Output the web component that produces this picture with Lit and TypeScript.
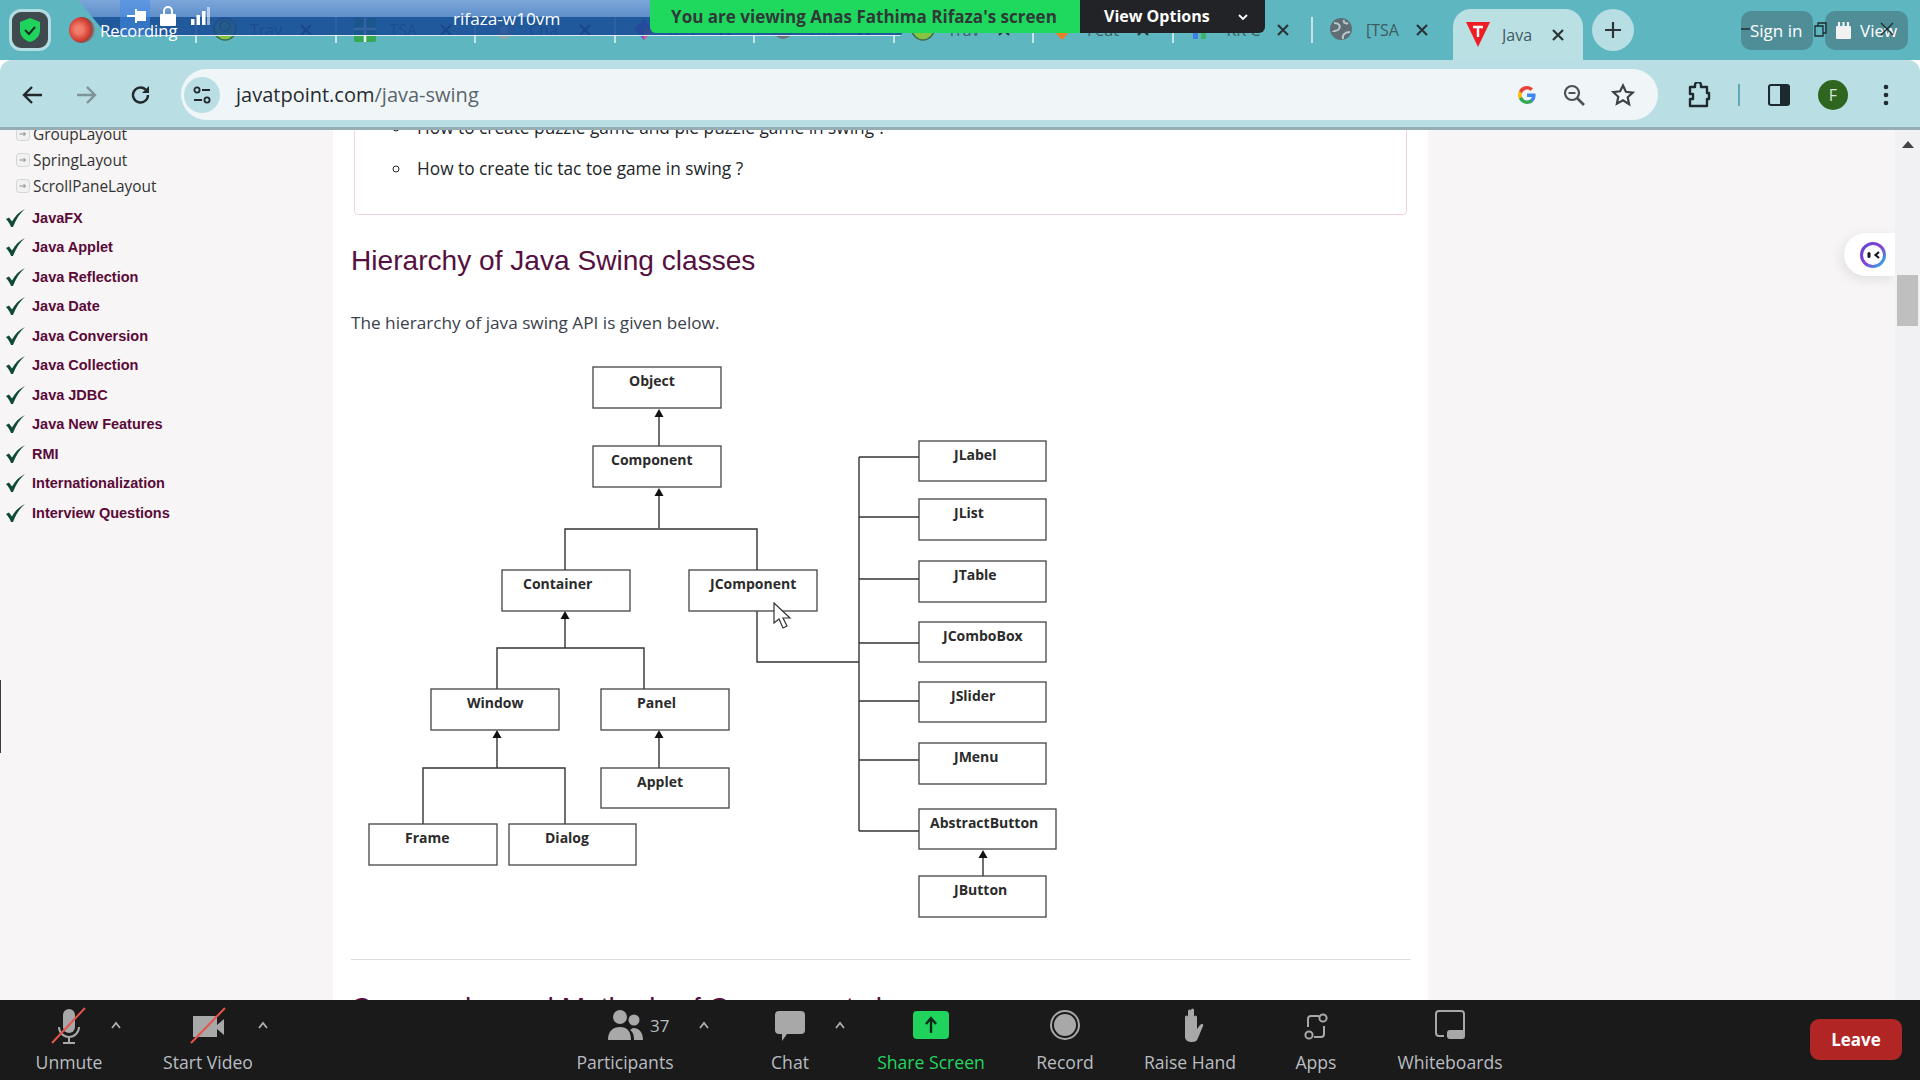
import { LitElement, css, html, svg } from 'lit';
import { customElement } from 'lit/decorators.js';

const TABS = [
  { title: 'Trav', icon: 'smile' },
  { title: 'TSA', icon: 'sheet' },
  { title: 'Cha', icon: 'chat' },
  { title: 'Dev', icon: 'gem' },
  { title: 'Yoo', icon: 'grey' },
  { title: 'Trav', icon: 'smile' },
  { title: 'Feat', icon: 'fox' },
  { title: 'KR C', icon: 'bars' },
  { title: '[TSA', icon: 'globe' },
];

const LAYOUTS = ['GroupLayout', 'SpringLayout', 'ScrollPaneLayout'];

const TOPICS = [
  'JavaFX', 'Java Applet', 'Java Reflection', 'Java Date', 'Java Conversion', 'Java Collection',
  'Java JDBC', 'Java New Features', 'RMI', 'Internationalization', 'Interview Questions',
];

// x, y, w, h, label, label x
const BOXES: [number, number, number, number, string, number][] = [
  [593, 366, 128, 41, 'Object', 629],
  [593, 445, 128, 41, 'Component', 611],
  [502, 569, 128, 41, 'Container', 523],
  [689, 569, 128, 41, 'JComponent', 710],
  [431, 688, 128, 41, 'Window', 467],
  [601, 688, 128, 41, 'Panel', 637],
  [601, 767, 128, 40, 'Applet', 637],
  [369, 823, 128, 41, 'Frame', 405],
  [509, 823, 127, 41, 'Dialog', 545],
  [919, 440, 127, 40, 'JLabel', 954],
  [919, 498, 127, 41, 'JList', 954],
  [919, 560, 127, 41, 'JTable', 954],
  [919, 621, 127, 40, 'JComboBox', 943],
  [919, 681, 127, 40, 'JSlider', 951],
  [919, 742, 127, 41, 'JMenu', 954],
  [919, 808, 137, 40, 'AbstractButton', 930],
  [919, 875, 127, 41, 'JButton', 954],
];

const WIRES = [
  'M659 445V414', 'M659 527V493', 'M565 569V528H757V569', 'M565 647V617', 'M497 688V647H644V688',
  'M497 767V736', 'M423 823V767H565V823', 'M659 767V736', 'M757 610V661H859',
  'M859 456V830', 'M859 456H919', 'M859 516H919', 'M859 578H919', 'M859 642H919', 'M859 700H919',
  'M859 759H919', 'M859 830H919', 'M983 875V855',
];

const ARROWS = [[659, 408], [659, 487], [565, 610], [497, 729], [659, 729], [983, 849]];

const GREY = '#a8a8a8';

const TOOL_ICONS: Record<string, unknown> = {
  mic: svg`<rect x="18" y="3" width="12" height="24" rx="6" fill="${GREY}"/>
    <path d="M14 21a10 10 0 0 0 20 0M24 31v5M18 37h12" fill="none" stroke="${GREY}" stroke-width="2"/>
    <path d="M40 2 7 37" stroke="#e5534b" stroke-width="2"/>`,
  video: svg`<path d="M9 10h24v21H9zM33 19l7-6v16l-7-6z" fill="${GREY}"/>
    <path d="M41 2 7 37" stroke="#e5534b" stroke-width="2"/>`,
  people: svg`<circle cx="19" cy="11" r="7" fill="${GREY}"/><circle cx="33" cy="14" r="5.5" fill="${GREY}"/>
    <path d="M7 34c0-9 5-13 12-13s11 4 11 13zM32 22c6 0 10 4 10 12H33c0-5-1-8-4-10z" fill="${GREY}"/>`,
  chat: svg`<path d="M13 5h22a4 4 0 0 1 4 4v15a4 4 0 0 1-4 4H21l-5 7v-7h-3a4 4 0 0 1-4-4V9a4 4 0 0 1 4-4z" fill="#a8a8a8"/>`,
  share: svg`<rect x="6" y="5" width="36" height="28" rx="4" fill="#1fd35c"/>
    <path d="M24 27V13M19 18l5-6 5 6" fill="none" stroke="#10281a" stroke-width="2.4"/>`,
  record: svg`<circle cx="24" cy="19" r="14" fill="none" stroke="${GREY}" stroke-width="2"/><circle cx="24" cy="19" r="11" fill="${GREY}"/>`,
  hand: svg`<path d="M19 31V11a1.5 1.5 0 0 1 3 0V5a1.5 1.5 0 0 1 3 0v5V4a1.5 1.5 0 0 1 3 0v7a1.5 1.5 0 0 1 3 0v12l3-4c2-2 4-1 3 1l-5 12c-1 3-3 4-6 4-4 0-7-2-7-5z" fill="${GREY}"/>`,
  apps: svg`<path d="M27 10h-8a3 3 0 0 0-3 3v8M32 20v8a3 3 0 0 1-3 3h-7" fill="none" stroke="${GREY}" stroke-width="2"/>
    <circle cx="31" cy="12" r="3.6" fill="none" stroke="${GREY}" stroke-width="2"/><circle cx="17" cy="29" r="3.6" fill="none" stroke="${GREY}" stroke-width="2"/>`,
  board: svg`<path d="M18 30h-5a3 3 0 0 1-3-3V8a3 3 0 0 1 3-3h22a3 3 0 0 1 3 3v19" fill="none" stroke="${GREY}" stroke-width="2"/>
    <rect x="21" y="24" width="18" height="9" rx="3" fill="${GREY}"/>`,
};

const TOOLS = [
  { label: 'Unmute', icon: 'mic', w: 78, ml: 30, caret: true },
  { label: 'Start Video', icon: 'video', w: 94, ml: 37, caret: true },
  { label: 'Participants', icon: 'people', w: 110, ml: 299, caret: true, count: '37', capMl: 16 },
  { label: 'Chat', icon: 'chat', w: 50, ml: 53, caret: true, capMl: 17 },
  { label: 'Share Screen', icon: 'share', w: 120, ml: 23, green: true },
  { label: 'Record', icon: 'record', w: 70, ml: 39 },
  { label: 'Raise Hand', icon: 'hand', w: 100, ml: 40 },
  { label: 'Apps', icon: 'apps', w: 50, ml: 51 },
  { label: 'Whiteboards', icon: 'board', w: 110, ml: 54 },
];

function favicon(kind: string) {
  switch (kind) {
    case 'smile':
      return svg`<circle cx="12" cy="12" r="11" fill="#86c440" stroke="#3f6b55" stroke-width="1.5"/><circle cx="12" cy="9" r="5" fill="none" stroke="#3f6b55" stroke-width="1.5"/>`;
    case 'sheet':
      return svg`<rect x="1" y="1" width="22" height="24" rx="2" fill="#37a853"/><path d="M12 1v24M1 12h22" stroke="#e8f5ec" stroke-width="2.5"/>`;
    case 'chat':
      return svg`<circle cx="12" cy="13" r="9" fill="#8aa9a8"/><circle cx="12" cy="13" r="4" fill="#cdd9d8"/>`;
    case 'gem':
      return svg`<path d="M12 2 22 12 12 23 2 12z" fill="#7b4fc0"/><path d="M12 12 22 12 12 23z" fill="#e05a8a"/>`;
    case 'grey':
      return svg`<circle cx="12" cy="12" r="10" fill="#6d7479"/>`;
    case 'fox':
      return svg`<path d="M12 23 2 12 7 3l5 4 5-4 5 9z" fill="#ef7d22"/>`;
    case 'bars':
      return svg`<rect x="3" y="8" width="5" height="14" fill="#3f7fe0"/><rect x="11" y="4" width="5" height="18" fill="#3eb36a"/>`;
    default:
      return svg`<circle cx="12" cy="12" r="11" fill="#5f6d75"/><path d="M5 6c5 0 7 3 5 6s-6 1-6 3M15 3c-1 3 2 4 4 3M14 22c-1-4 2-7 7-7" fill="none" stroke="#b9c6ca" stroke-width="2"/>`;
  }
}

@customElement('app-root')
export class AppRoot extends LitElement {
  static styles = css`
    :host { display: block; }
    * { box-sizing: border-box; }
    svg { display: block; flex: none; }
    .page {
      position: relative;
      display: flex;
      flex-direction: column;
      height: 1080px;
      overflow: hidden;
      font-family: 'Open Sans', sans-serif;
      background: #fff;
    }

    /* browser chrome */
    .strip {
      display: flex;
      align-items: center;
      flex: none;
      height: 60px;
      background: #5eb7c0;
    }
    .left { display: flex; align-items: center; flex: none; width: 195px; padding-left: 9px; }
    .shield {
      display: flex;
      align-items: center;
      justify-content: center;
      width: 42px;
      height: 42px;
      background: #3f4a4e;
      border: 3px solid #b5dde1;
      border-radius: 12px;
    }
    .rec-dot {
      position: relative;
      z-index: 2;
      width: 26px;
      height: 26px;
      margin-left: 18px;
      border-radius: 50%;
      background: radial-gradient(circle at 38% 48%, #f27d6c 0 18%, #cf3a2e 55%, #8a4a48 62%, #7d8b90 72%);
    }
    .rec-text { position: relative; z-index: 2; margin-left: 5px; color: #fff; font-size: 16.5px; white-space: nowrap; }
    .tab {
      display: flex;
      align-items: center;
      flex: none;
      width: 139.5px;
      height: 26px;
      padding-left: 16px;
      border-left: 2px solid #c4e4e7;
      color: #3e5b62;
      font-size: 16px;
    }
    .tab .title { width: 42px; margin-left: 13px; overflow: hidden; white-space: nowrap; }
    .tab .x { margin-left: 6px; }
    .active {
      display: flex;
      align-items: center;
      flex: none;
      width: 130px;
      height: 51px;
      margin: 9px 0 0 2.5px;
      padding-left: 13px;
      background: #bbe0e4;
      border-radius: 18px 18px 0 0;
      color: #3e5b62;
      font-size: 16px;
    }
    .active .title { width: 36px; margin-left: 12px; overflow: hidden; }
    .active .x { margin-left: 12px; }
    .plus {
      display: flex;
      align-items: center;
      justify-content: center;
      flex: none;
      width: 42px;
      height: 42px;
      margin-left: 9px;
      border-radius: 50%;
      background: #b7dfe3;
    }
    .winbtn {
      display: flex;
      align-items: center;
      flex: none;
      height: 39px;
      background: #4f8d97;
      border-radius: 10px;
      color: #fff;
      font-size: 17px;
    }
    .signin { width: 72px; margin-left: 107px; padding-left: 9px; }
    .view { width: 83px; margin-left: 12px; padding-left: 11px; gap: 9px; }
    .wm { position: absolute; top: 0; left: 1735px; }

    .toolbar {
      display: flex;
      align-items: center;
      flex: none;
      height: 70px;
      padding-top: 2px;
      background: #b9dfe4;
      border-bottom: 3px solid #95adb3;
      border-radius: 12px 12px 0 0;
    }
    .nav { display: flex; align-items: center; justify-content: center; flex: none; width: 44px; height: 44px; }
    .nav.back { margin-left: 11px; }
    .nav.fwd { margin-left: 9px; }
    .nav.reload { margin-left: 11px; }
    .omni {
      display: flex;
      align-items: center;
      flex: none;
      width: 1477px;
      height: 51px;
      margin-left: 18px;
      padding: 0 23px 0 3px;
      background: #f0f6f8;
      border-radius: 26px;
    }
    .site {
      display: flex;
      align-items: center;
      justify-content: center;
      flex: none;
      width: 36px;
      height: 36px;
      border-radius: 50%;
      background: #b9dfe4;
    }
    .url { margin-left: 16px; color: #262b2f; font-size: 20px; }
    .url span { color: #59656a; }
    .omni-end { display: flex; align-items: center; gap: 25px; margin-left: auto; }
    .tb-end { display: flex; align-items: center; margin-left: 29px; }
    .divider { width: 2px; height: 22px; margin-left: 27px; background: #5eaab5; }
    .panel { margin-left: 28px; }
    .avatar {
      display: flex;
      align-items: center;
      justify-content: center;
      width: 30px;
      height: 30px;
      margin-left: 28px;
      border-radius: 50%;
      background: #2e651f;
      color: #dbe8d5;
      font-size: 16px;
    }
    .dots { margin-left: 35px; }

    /* page */
    .body { display: flex; flex: 1; min-height: 0; overflow: hidden; }
    .side { flex: none; width: 333px; padding: 0 0 0 6px; background: #f7f5f5; }
    .sub {
      display: flex;
      align-items: center;
      height: 26px;
      padding-left: 10px;
      color: #333;
      font-size: 15.4px;
    }
    .sub:first-child { margin-top: -9px; }
    .sub svg { margin-right: 3px; }
    .topic {
      display: flex;
      align-items: center;
      height: 29.5px;
      color: #5a0a38;
      font: 700 14.5px 'Liberation Sans', sans-serif;
    }
    .topic svg { margin-right: 7px; }
    .subs { margin-bottom: 4px; }

    .main { flex: none; width: 1095px; padding: 0 21px 0 18px; background: #fff; }
    .box {
      margin: -24px 0 0 3px;
      height: 109px;
      border: 1px solid #f6cfe0;
      border-radius: 4px;
      color: #22262a;
    }
    .box ul { margin: 0; padding: 0 0 0 57px; list-style: circle; }
    .box li { height: 41px; line-height: 41px; padding-left: 5px; font-size: 17.3px; }
    h2 {
      margin: 0;
      color: #551040;
      font: 400 28.1px/32px 'Liberation Sans', sans-serif;
      white-space: nowrap;
    }
    .h1 { margin-top: 30px; }
    p { margin: 34px 0 0; color: #3a414b; font-size: 17.2px; line-height: 24px; }
    .diagram { margin: 0 0 0 -1px; }
    .diagram text { font: 700 14px 'Open Sans', sans-serif; fill: #2b2b2b; }
    hr { height: 1px; margin: 0 -4px 0 0; border: 0; background: #dcdcdc; }
    .h2 { margin-top: 32px; }

    .right {
      position: relative;
      flex: none;
      width: 467px;
      background: #f7f5f5;
    }
    .bot {
      position: absolute;
      top: 103px;
      right: 0;
      display: flex;
      align-items: center;
      width: 51px;
      height: 43px;
      padding-left: 15px;
      background: #fff;
      border-radius: 22px 0 0 22px;
      box-shadow: -2px 3px 12px rgba(60, 60, 70, 0.12);
    }
    .scroll { position: relative; flex: none; width: 25px; background: #f1f1f4; }
    .scroll-up {
      position: absolute;
      top: 11px;
      left: 7px;
      width: 0;
      height: 0;
      border: 6px solid transparent;
      border-top: 0;
      border-bottom: 7px solid #444;
    }
    .thumb {
      position: absolute;
      top: 145px;
      left: 2px;
      width: 21px;
      height: 51px;
      background: #bfbfbf;
    }
    .edge { position: absolute; top: 680px; left: 0; width: 1px; height: 73px; background: #3a3a3a; }

    /* meeting bar */
    .meet {
      display: flex;
      align-items: flex-start;
      flex: none;
      height: 80px;
      background: #1a1a1a;
    }
    .tool {
      position: relative;
      display: flex;
      flex-direction: column;
      align-items: center;
      flex: none;
      padding-top: 6px;
      color: #b9bdc1;
      font-size: 17.6px;
      white-space: nowrap;
    }
    .tool.green { color: #22d65f; }
    .tool .label { margin-top: 5px; line-height: 26px; }
    .count { position: absolute; top: 14px; left: 80px; color: #b9bdc1; font-size: 17px; }
    .caret { flex: none; width: 16px; margin-top: 20px; }
    .leave {
      display: flex;
      align-items: center;
      justify-content: center;
      flex: none;
      width: 92px;
      height: 41px;
      margin: 19px 0 0 305px;
      background: #b22525;
      border-radius: 9px;
      color: #fff;
      font-size: 17px;
      font-weight: 700;
    }

    /* zoom overlay */
    .banner {
      position: absolute;
      z-index: 1;
      top: 0;
      left: 78px;
      display: flex;
      align-items: center;
      width: 852px;
      height: 36px;
      clip-path: polygon(0 0, 100% 0, calc(100% - 30px) 100%, 30px 100%);
      background: linear-gradient(180deg, #7ba6da 0, #5f8fca 17px, rgba(22, 74, 150, 0.86) 17px, rgba(22, 74, 150, 0.86) 35px, #dfe9f0 35px);
    }
    .pin {
      display: flex;
      align-items: center;
      justify-content: center;
      width: 30px;
      height: 36px;
      margin-left: 42px;
      background: rgba(70, 140, 230, 0.55);
    }
    .pin svg { margin: 0 0 4px 4px; }
    .lock { margin: 0 0 5px 10px; }
    .signal { margin: 0 0 4px 15px; }
    .host { margin-left: 243px; color: #fff; font-size: 17.2px; }
    .share {
      position: absolute;
      z-index: 3;
      top: 0;
      left: 650px;
      display: flex;
      height: 33px;
      border-radius: 0 0 6px 6px;
      overflow: hidden;
      font-size: 17.05px;
      font-weight: 700;
      line-height: 33px;
    }
    .viewing { width: 430px; padding-left: 21px; background: #1fd95e; color: #2f3a38; white-space: nowrap; }
    .options { display: flex; align-items: center; width: 185px; padding-left: 24px; background: #222326; color: #fff; font-size: 16px; }
    .options svg { margin-left: 27px; }
    .cursor { position: absolute; top: 602px; left: 773px; }
  `;

  renderX(stroke = '#2b3438') {
    return html`<svg class="x" width="16" height="16" viewBox="0 0 16 16">
      <path d="M3 3l10 10M13 3 3 13" stroke=${stroke} stroke-width="2.2" />
    </svg>`;
  }

  renderTool(t: (typeof TOOLS)[number]) {
    return html`
      <div class="tool ${t.green ? 'green' : ''}" style="width:${t.w}px;margin-left:${t.ml}px">
        <svg width="48" height="38" viewBox="0 0 48 38">${TOOL_ICONS[t.icon]}</svg>
        ${t.count ? html`<span class="count">${t.count}</span>` : null}
        <span class="label">${t.label}</span>
      </div>
      ${t.caret
        ? html`<svg class="caret" style="margin-left:${t.capMl ?? 0}px" width="16" height="10" viewBox="0 0 16 10">
            <path d="M4 8l4-5 4 5" fill="none" stroke="#b0b0b0" stroke-width="1.8" />
          </svg>`
        : null}
    `;
  }

  renderDiagram() {
    return html`<svg class="diagram" width="750" height="624" viewBox="350 334 750 624">
      ${WIRES.map((d) => svg`<path d=${d} fill="none" stroke="#333" stroke-width="1.4" />`)}
      ${ARROWS.map(([x, y]) => svg`<path d="M${x} ${y}l4.5 8h-9z" fill="#111" />`)}
      ${BOXES.map(
        ([x, y, w, h, label, lx]) => svg`
          <rect x=${x} y=${y} width=${w} height=${h} fill="#fff" stroke="#444" stroke-width="1.3" />
          <text x=${lx} y=${y + 19}>${label}</text>`,
      )}
    </svg>`;
  }

  render() {
    return html`
      <div class="page">
        <div class="strip">
          <div class="left">
            <div class="shield">
              <svg width="24" height="26" viewBox="0 0 24 26">
                <path d="M12 1 22 5v8c0 6-4 10-10 12C6 23 2 19 2 13V5z" fill="#1fd35c" />
                <path d="M7 13l4 4 6-7" fill="none" stroke="#1d2b25" stroke-width="2" />
              </svg>
            </div>
            <div class="rec-dot"></div>
            <span class="rec-text">Recording</span>
          </div>
          ${TABS.map(
            (t) => html`<div class="tab">
              <svg width="24" height="26" viewBox="0 0 24 26">${favicon(t.icon)}</svg>
              <span class="title">${t.title}</span>
              ${this.renderX()}
            </div>`,
          )}
          <div class="active">
            <svg width="24" height="26" viewBox="0 0 24 26">
              <path d="M0 0h24L12 25z" fill="#f01c24" />
              <path d="M7 5h10M12 5v10" stroke="#fff" stroke-width="2.4" />
            </svg>
            <span class="title">Java</span>
            ${this.renderX()}
          </div>
          <div class="plus">
            <svg width="18" height="18" viewBox="0 0 18 18"><path d="M9 1v16M1 9h16" stroke="#2b3438" stroke-width="2.2" /></svg>
          </div>
          <div class="winbtn signin">Sign in</div>
          <div class="winbtn view">
            <svg width="15" height="17" viewBox="0 0 15 17">
              <rect y="4" width="15" height="13" rx="1" fill="#f2f2f2" />
              <path d="M3 0v5M7.500 0v5M12 0v5" stroke="#f2f2f2" stroke-width="2.200" />
            </svg>
            View
          </div>
        </div>

        <div class="toolbar">
          <div class="nav back">
            <svg width="22" height="22" viewBox="0 0 22 22"><path d="M20 11H3M10 3l-8 8 8 8" fill="none" stroke="#22282c" stroke-width="2.4" /></svg>
          </div>
          <div class="nav fwd">
            <svg width="22" height="22" viewBox="0 0 22 22"><path d="M2 11h17M12 3l8 8-8 8" fill="none" stroke="#7e9297" stroke-width="2.4" /></svg>
          </div>
          <div class="nav reload">
            <svg width="22" height="22" viewBox="0 0 22 22">
              <path d="M18 11a7.5 7.5 0 1 1-2.4-5.5" fill="none" stroke="#22282c" stroke-width="2.4" />
              <path d="M19 2v7h-7z" fill="#22282c" />
            </svg>
          </div>
          <div class="omni">
            <div class="site">
              <svg width="20" height="20" viewBox="0 0 20 20">
                <circle cx="5" cy="5" r="2.6" fill="none" stroke="#22282c" stroke-width="1.8" />
                <path d="M10 5h8M2 15h8" stroke="#22282c" stroke-width="1.8" />
                <circle cx="15" cy="15" r="2.6" fill="none" stroke="#22282c" stroke-width="1.8" />
              </svg>
            </div>
            <div class="url">javatpoint.com<span>/java-swing</span></div>
            <div class="omni-end">
              <svg width="20" height="20" viewBox="0 0 20 20">
                <path d="M18.6 10.2c0-.6-.1-1.3-.2-1.8H10v3.5h4.8c-.2 1.1-.8 2.1-1.8 2.7v2.2h2.9c1.700-1.600 2.700-3.900 2.700-6.600z" fill="#4285f4" />
                <path d="M10 19c2.400 0 4.500-.8 5.900-2.200L13 14.600c-.8.500-1.800.9-3 .9-2.300 0-4.300-1.600-5-3.700H2v2.300C3.500 17.100 6.500 19 10 19z" fill="#34a853" />
                <path d="M5 11.800c-.4-1.100-.4-2.400 0-3.600V5.900H2c-1.300 2.500-1.300 5.600 0 8.200z" fill="#fbbc05" />
                <path d="M10 4.600c1.300 0 2.500.5 3.400 1.300L16 3.400C14.400 1.900 12.300 1 10 1 6.500 1 3.500 2.900 2 5.900l3 2.300c.7-2.100 2.700-3.600 5-3.600z" fill="#ea4335" />
              </svg>
              <svg width="24" height="24" viewBox="0 0 24 24">
                <circle cx="10" cy="10" r="7" fill="none" stroke="#4c5256" stroke-width="2.2" />
                <path d="M15 15l7 7" stroke="#4c5256" stroke-width="2.6" />
                <path d="M6.500 10h7" stroke="#4c5256" stroke-width="2" />
              </svg>
              <svg width="24" height="24" viewBox="0 0 24 24">
                <path d="M12 2.500l2.900 6.300 6.900.8-5.100 4.700 1.400 6.800L12 17.200l-6.100 3.400 1.400-6.800-5.100-4.700 6.900-.8z" fill="none" stroke="#3c4246" stroke-width="2.200" />
              </svg>
            </div>
          </div>
          <div class="tb-end">
            <svg width="24" height="26" viewBox="0 0 24 26">
              <path d="M3 5h5V3a3 3 0 0 1 6 0v2h6v6h2v6h-2v7H3v-7h3v-5H3z" fill="none" stroke="#1f2a30" stroke-width="2.400" stroke-linejoin="round" />
            </svg>
            <div class="divider"></div>
            <svg class="panel" width="22" height="24" viewBox="0 0 22 24">
              <rect x="1" y="2" width="20" height="20" rx="2" fill="none" stroke="#1f2a30" stroke-width="2.200" />
              <rect x="12" y="2" width="9" height="20" fill="#1f2a30" />
            </svg>
            <div class="avatar">F</div>
            <svg class="dots" width="6" height="24" viewBox="0 0 6 24">
              <circle cx="3" cy="4" r="2.300" fill="#1f2a30" /><circle cx="3" cy="12" r="2.300" fill="#1f2a30" /><circle cx="3" cy="20" r="2.300" fill="#1f2a30" />
            </svg>
          </div>
        </div>

        <div class="body">
          <div class="side">
            <div class="subs">
              ${LAYOUTS.map(
                (l) => html`<div class="sub">
                  <svg width="14" height="14" viewBox="0 0 14 14">
                    <rect x=".5" y=".5" width="13" height="13" rx="3" fill="#f1f1f1" stroke="#d5d5d5" />
                    <path d="M3.500 7h6M7.500 5l2 2-2 2" fill="none" stroke="#8a8a8a" />
                  </svg>
                  ${l}
                </div>`,
              )}
            </div>
            ${TOPICS.map(
              (t) => html`<div class="topic">
                <svg width="19" height="18" viewBox="0 0 19 18">
                  <path d="M0 10l3-1.500 3 4C9 7 13 3 19 0c-5 4-9 10-12 18H5C4 15 2 12 0 10z" fill="#0e4a34" />
                </svg>
                ${t}
              </div>`,
            )}
          </div>

          <div class="main">
            <div class="box">
              <ul>
                <li>How to create puzzle game and pie puzzle game in swing ?</li>
                <li>How to create tic tac toe game in swing ?</li>
              </ul>
            </div>
            <h2 class="h1">Hierarchy of Java Swing classes</h2>
            <p>The hierarchy of java swing API is given below.</p>
            ${this.renderDiagram()}
            <hr />
            <h2 class="h2">Commonly used Methods of Component class</h2>
          </div>

          <div class="right">
            <div class="bot">
              <svg width="28" height="28" viewBox="0 0 28 28">
                <defs>
                  <linearGradient id="ring" x1="0" y1="0" x2="1" y2="1">
                    <stop offset="0" stop-color="#5b45d8" />
                    <stop offset=".5" stop-color="#8a3fd0" />
                    <stop offset="1" stop-color="#22b8e8" />
                  </linearGradient>
                </defs>
                <circle cx="14" cy="14" r="11.500" fill="none" stroke="url(#ring)" stroke-width="3" />
                <rect x="8.500" y="11" width="3" height="6" rx="1.500" fill="#16161c" />
                <path d="M20 11l-3.500 3 3.500 3" fill="none" stroke="#16161c" stroke-width="2.200" />
              </svg>
            </div>
          </div>
          <div class="scroll">
            <div class="scroll-up"></div>
            <div class="thumb"></div>
          </div>
        </div>

        <div class="meet">
          ${TOOLS.map((t) => this.renderTool(t))}
          <div class="leave">Leave</div>
        </div>

        <div class="edge"></div>

        <div class="banner">
          <div class="pin">
            <svg width="20" height="16" viewBox="0 0 20 16">
              <path d="M0 8h9M9 1v14" fill="none" stroke="#fff" stroke-width="2" />
              <rect x="10" y="3" width="9" height="10" fill="#fff" />
            </svg>
          </div>
          <svg class="lock" width="16" height="20" viewBox="0 0 16 20">
            <path d="M4 9V5a4 4 0 0 1 8 0v4" fill="none" stroke="#fff" stroke-width="2" />
            <rect y="8" width="16" height="12" rx="1" fill="#fff" />
          </svg>
          <svg class="signal" width="19" height="18" viewBox="0 0 19 18">
            <rect y="12" width="3.500" height="6" fill="#fff" />
            <rect x="5.500" y="8" width="3.500" height="10" fill="#fff" />
            <rect x="11" y="4" width="3.500" height="14" fill="#fff" />
            <rect x="16" width="3" height="18" fill="#fff" opacity=".55" />
          </svg>
          <span class="host">rifaza-w10vm</span>
        </div>

        <div class="share">
          <div class="viewing">You are viewing Anas Fathima Rifaza's screen</div>
          <div class="options">
            View Options
            <svg width="12" height="8" viewBox="0 0 12 8"><path d="M2 2l4 4 4-4" fill="none" stroke="#fff" stroke-width="1.800" /></svg>
          </div>
        </div>

        <svg class="wm" width="165" height="60" viewBox="0 0 165 60">
          <path d="M6 29h9" stroke="#1c2a2e" stroke-width="1.400" />
          <path d="M83 26v-3h8v10h-3M80 26h8v10h-8z" fill="none" stroke="#1c2a2e" stroke-width="1.300" />
          <path d="M146 23l12 12M158 23l-12 12" stroke="#1c2a2e" stroke-width="1.200" />
        </svg>

        <svg class="cursor" width="20" height="28" viewBox="0 0 20 28">
          <path d="M1 1v20l5-4 4 9 4-2-4-8h7z" fill="#fff" stroke="#333" stroke-width="1.200" />
        </svg>
      </div>
    `;
  }
}
